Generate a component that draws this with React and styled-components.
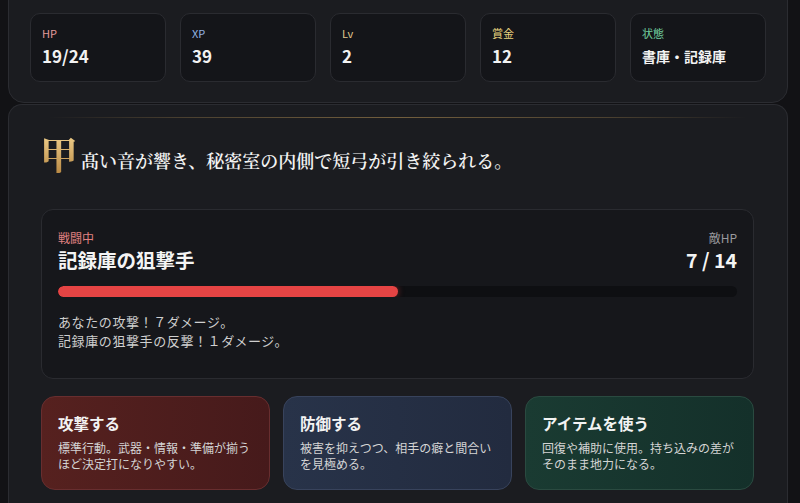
import React from 'react';
import styled, { createGlobalStyle } from 'styled-components';

const GlobalStyle = createGlobalStyle`
    html, body {
        margin: 0;
        padding: 0;
        background: #121215;
        overflow: hidden;
    }
    body {
        font-family: 'Noto Sans CJK JP', 'Noto Sans', sans-serif;
        color: #ececec;
    }
`;

const Page = styled.div`
    height: 503px;
    padding: 0 12px 0 8px;
    display: flex;
    flex-direction: column;
    gap: 1px;
`;

const StatusPanel = styled.section`
    margin-top: -20px;
    padding: 32px 21px 20px;
    background: #1b1c20;
    border: 1px solid #2b2c31;
    border-radius: 16px;
    display: grid;
    grid-template-columns: repeat(5, 1fr);
    gap: 14px;
`;

const StatCard = styled.div`
    height: 69px;
    box-sizing: border-box;
    padding: 11px 11px;
    background: #141519;
    border: 1px solid #2a2b30;
    border-radius: 10px;
    display: flex;
    flex-direction: column;
    gap: 3px;
`;

const StatLabel = styled.span`
    font-size: 11px;
    line-height: 16px;
    color: ${(p) => p.$color};
`;

const StatValue = styled.span`
    font-size: ${(p) => (p.$small ? '14px' : '17px')};
    line-height: 24px;
    font-weight: 700;
    color: #f2f2f2;
`;

const StagePanel = styled.section`
    position: relative;
    flex: 1;
    padding: 28px 33px 0 33px;
    background: #1b1c20;
    border: 1px solid #2b2c31;
    border-bottom: none;
    border-radius: 14px 14px 0 0;

    &::before {
        content: '';
        position: absolute;
        top: 12px;
        left: 40px;
        right: 40px;
        height: 1px;
        background: linear-gradient(90deg, transparent, rgba(201, 160, 90, 0.28) 20%, rgba(201, 160, 90, 0.5) 50%, rgba(201, 160, 90, 0.28) 80%, transparent);
    }
`;

const Narration = styled.h2`
    margin: 0 0 0 -2px;
    display: flex;
    align-items: flex-end;
    gap: 3px;
    font-family: 'Noto Serif CJK JP', 'Noto Serif', 'Liberation Serif', serif;
    font-weight: 400;
`;

const DropCap = styled.span`
    font-size: 38px;
    line-height: 40px;
    font-weight: 700;
    background: linear-gradient(180deg, #f3d28e, #b98a45);
    -webkit-background-clip: text;
    background-clip: text;
    color: transparent;
`;

const NarrationText = styled.span`
    font-size: 18px;
    line-height: 26px;
    font-weight: 600;
    color: #f2f2f2;
`;

const BattleBox = styled.div`
    margin-top: 36px;
    margin-left: -1px;
    height: 170px;
    box-sizing: border-box;
    padding: 20px 16px 0 16px;
    background: #16171b;
    border: 1px solid #2a2b30;
    border-radius: 12px;
`;

const BattleHead = styled.div`
    display: flex;
    justify-content: space-between;
    align-items: flex-end;
`;

const Col = styled.div`
    display: flex;
    flex-direction: column;
    align-items: ${(p) => (p.$right ? 'flex-end' : 'flex-start')};
`;

const SmallLabel = styled.span`
    font-size: 12px;
    line-height: 16px;
    color: ${(p) => p.$color};
`;

const EnemyName = styled.span`
    font-size: 19.5px;
    line-height: 28px;
    font-weight: 700;
    color: #f4f4f4;
`;

const HpTrack = styled.div`
    margin-top: 12px;
    height: 11px;
    border-radius: 6px;
    background: #0e0f12;
    overflow: hidden;
`;

const HpFill = styled.div`
    height: 100%;
    border-radius: 6px;
    background: #e54444;
    box-shadow: 0 0 6px rgba(229, 68, 68, 0.5);
`;

const Log = styled.div`
    margin-top: 15px;
    font-size: 13px;
    line-height: 19px;
    letter-spacing: 0.6px;
    color: #cfcfcf;
`;

const Actions = styled.div`
    margin-top: 17px;
    margin-left: -1px;
    display: grid;
    grid-template-columns: repeat(3, 1fr);
    gap: 13px;
`;

const tones = {
    attack: { bg: 'linear-gradient(90deg, #56211f, #461a1b)', border: '#682e2f' },
    defend: { bg: 'linear-gradient(90deg, #283349, #222b3f)', border: '#38435c' },
    item: { bg: 'linear-gradient(90deg, #1a3b32, #14302a)', border: '#2a4a40' },
};

const ActionButton = styled.button`
    height: 94px;
    box-sizing: border-box;
    padding: 16px 16px 0 16px;
    text-align: left;
    font-family: inherit;
    background: ${(p) => tones[p.$tone].bg};
    border: 1px solid ${(p) => tones[p.$tone].border};
    border-radius: 14px;
    display: flex;
    flex-direction: column;
    align-items: flex-start;
    gap: 7px;
    cursor: pointer;
`;

const ActionTitle = styled.span`
    font-size: 15.5px;
    line-height: 20px;
    font-weight: 700;
    color: #f3f3f3;
`;

const ActionDesc = styled.span`
    font-size: 12px;
    line-height: 16px;
    color: #d4d4d4;
`;

const stats = [
    { label: 'HP', value: '19/24', color: '#e49b9b' },
    { label: 'XP', value: '39', color: '#93b3e2' },
    { label: 'Lv', value: '2', color: '#e2c98e' },
    { label: '賞金', value: '12', color: '#e7d17e' },
    { label: '状態', value: '書庫・記録庫', color: '#72cf9f', small: true },
];

const actions = [
    { tone: 'attack', title: '攻撃する', desc: '標準行動。武器・情報・準備が揃うほど決定打になりやすい。' },
    { tone: 'defend', title: '防御する', desc: '被害を抑えつつ、相手の癖と間合いを見極める。' },
    { tone: 'item', title: 'アイテムを使う', desc: '回復や補助に使用。持ち込みの差がそのまま地力になる。' },
];

export default function App() {
    const enemyHp = 7;
    const enemyMax = 14;
    return (
        <>
            <GlobalStyle />
            <Page>
                <StatusPanel>
                    {stats.map((s) => (
                        <StatCard key={s.label}>
                            <StatLabel $color={s.color}>{s.label}</StatLabel>
                            <StatValue $small={s.small}>{s.value}</StatValue>
                        </StatCard>
                    ))}
                </StatusPanel>
                <StagePanel>
                    <Narration>
                        <DropCap>甲</DropCap>
                        <NarrationText>髙い音が響き、秘密室の内側で短弓が引き絞られる。</NarrationText>
                    </Narration>
                    <BattleBox>
                        <BattleHead>
                            <Col>
                                <SmallLabel $color="#e08282">戦闘中</SmallLabel>
                                <EnemyName>記録庫の狙撃手</EnemyName>
                            </Col>
                            <Col $right>
                                <SmallLabel $color="#9a9a9e">敵HP</SmallLabel>
                                <EnemyName>
                                    {enemyHp} / {enemyMax}
                                </EnemyName>
                            </Col>
                        </BattleHead>
                        <HpTrack>
                            <HpFill style={{ width: `${(enemyHp / enemyMax) * 100}%` }} />
                        </HpTrack>
                        <Log>
                            あなたの攻撃！７ダメージ。
                            <br />
                            記録庫の狙撃手の反撃！１ダメージ。
                        </Log>
                    </BattleBox>
                    <Actions>
                        {actions.map((a) => (
                            <ActionButton key={a.tone} $tone={a.tone}>
                                <ActionTitle>{a.title}</ActionTitle>
                                <ActionDesc>{a.desc}</ActionDesc>
                            </ActionButton>
                        ))}
                    </Actions>
                </StagePanel>
            </Page>
        </>
    );
}
